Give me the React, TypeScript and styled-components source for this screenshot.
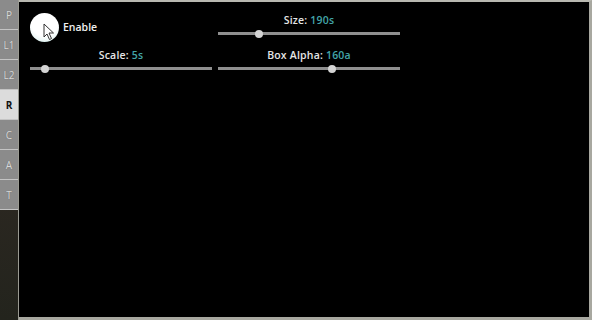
import React from 'react';
import styled, { createGlobalStyle } from 'styled-components';

const Global = createGlobalStyle`
  html, body { margin: 0; padding: 0; background: #000; }
  body { font-family: "Open Sans", "Noto Sans", sans-serif; }
`;

const Frame = styled.div`
  display: flex;
  width: 592px;
  height: 320px;
  overflow: hidden;
`;

const Sidebar = styled.div`
  width: 18px;
  display: flex;
  flex-direction: column;
  background: linear-gradient(180deg, #3a2f28 0%, #2e2822 45%, #23241d 100%);
  border-right: 1px solid #9a9a92;
`;

const Tab = styled.div<{ active?: boolean }>`
  height: 29px;
  display: flex;
  align-items: center;
  justify-content: center;
  font-size: 10px;
  font-weight: ${p => (p.active ? 700 : 400)};
  color: ${p => (p.active ? '#111' : '#d8d8d8')};
  background: ${p => (p.active ? '#dcdcdc' : '#8b8b8b')};
  border-bottom: 1.5px solid #c4c4c4;
  text-shadow: ${p => (p.active ? 'none' : '0 0 1px #666')};
`;

const Main = styled.div`
  flex: 1;
  background: #000;
  border-top: 2px solid #b8b8b0;
  border-right: 3px solid #a8a8a0;
  border-bottom: 3px solid #a8a8a0;
  padding: 11px 0 0 11px;
`;

const Grid = styled.div`
  display: grid;
  grid-template-columns: 182px 182px;
  grid-auto-rows: 35px;
  column-gap: 6px;
`;

const CheckCell = styled.div`
  display: flex;
  align-items: flex-start;
  gap: 4px;
`;

const Circle = styled.div`
  position: relative;
  width: 29px;
  height: 29px;
  border-radius: 50%;
  background: radial-gradient(circle at 50% 35%, #ffffff 55%, #eaf6f5 75%, #7fd8d2 100%);
`;

const Cursor = styled.svg`
  position: absolute;
  left: 13px;
  top: 10px;
`;

const CheckLabel = styled.span`
  color: #f0f0f0;
  font-size: 10.5px;
  font-weight: 600;
  line-height: 29px;
`;

const SliderCell = styled.div`
  display: flex;
  flex-direction: column;
  align-items: center;
`;

const Label = styled.div`
  color: #e6e6e6;
  font-size: 10.5px;
  font-weight: 600;
  letter-spacing: 0.2px;
  line-height: 14px;
`;

const Value = styled.span`
  color: #43a5a9;
`;

const Track = styled.div`
  position: relative;
  width: 182px;
  height: 3px;
  background: #8f8f8f;
  margin-top: 5px;
`;

const Thumb = styled.div`
  position: absolute;
  top: -2px;
  width: 8px;
  height: 8px;
  margin-left: -4px;
  border-radius: 50%;
  background: #d4d4d4;
`;

const Slider = ({ label, value, pos }: { label: string; value: string; pos: number }) => (
  <SliderCell>
    <Label>
      {label}: <Value>{value}</Value>
    </Label>
    <Track>
      <Thumb style={{ left: pos }} />
    </Track>
  </SliderCell>
);

const tabs = ['P', 'L1', 'L2', 'R', 'C', 'A', 'T'];

export default function App() {
  return (
    <>
      <Global />
      <Frame>
        <Sidebar>
          {tabs.map(t => (
            <Tab key={t} active={t === 'R'}>
              {t}
            </Tab>
          ))}
        </Sidebar>
        <Main>
          <Grid>
            <CheckCell>
              <Circle>
                <Cursor width="12" height="18" viewBox="0 0 12 18">
                  <path d="M1 1 L1 14 L4 11 L6.5 16.5 L8.5 15.5 L6 10 L10.5 10 Z" fill="#fff" stroke="#333" strokeWidth="1" strokeLinejoin="round" />
                </Cursor>
              </Circle>
              <CheckLabel>Enable</CheckLabel>
            </CheckCell>
            <Slider label="Size" value="190s" pos={41} />
            <Slider label="Scale" value="5s" pos={15} />
            <Slider label="Box Alpha" value="160a" pos={114} />
          </Grid>
        </Main>
      </Frame>
    </>
  );
}
